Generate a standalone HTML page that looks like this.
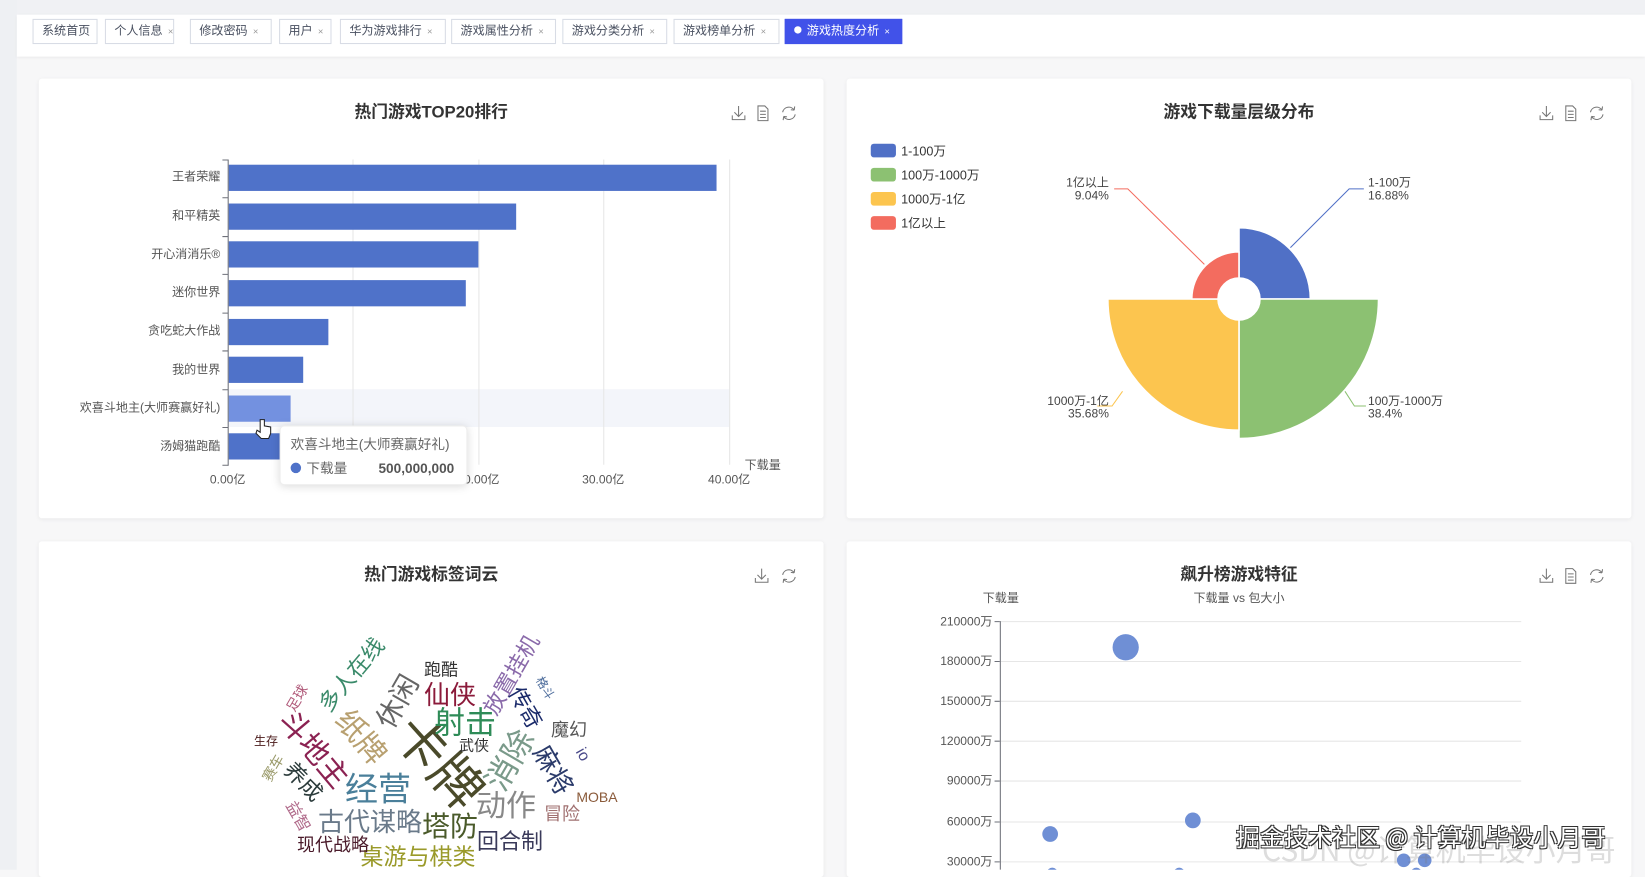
<!DOCTYPE html>
<html><head><meta charset="utf-8">
<style>
*{margin:0;padding:0;box-sizing:border-box}
html,body{width:1645px;height:870px;overflow:hidden;background:#f7f7f8;font-family:"Liberation Sans","Noto Sans CJK SC",sans-serif}
#wrap{position:absolute;left:0;top:0;width:1568px;height:829px;transform:scale(1.04911);transform-origin:0 0}
.leftstrip{position:absolute;left:0;top:0;width:16px;height:829px;background:#eef0f3}
.topstrip{position:absolute;left:0;top:0;width:1568px;height:14px;background:#f0f1f4}
.tabbar{position:absolute;left:16px;top:14px;width:1552px;height:40px;background:#fff;box-shadow:0 1px 3px rgba(0,0,0,.08)}
.tab{position:absolute;top:18px;height:24px;border:1px solid #d8dce5;background:#fff;font-size:11.5px;color:#495060;line-height:22px;padding-left:8px;white-space:nowrap}
.tab i{font-style:normal;color:#999;font-size:9px;margin-left:5px}
.tab.act{background:#4152e9;border-color:#4152e9;color:#fff}
.tab.act i{color:#fff}
.tab.act:before{content:"";display:inline-block;width:7px;height:7px;border-radius:50%;background:#fff;margin-right:5px;vertical-align:1px}
.panel{position:absolute;background:#fff;border-radius:3px;box-shadow:0 1px 4px rgba(0,0,0,.06)}
svg text{font-family:"Liberation Sans","Noto Sans CJK SC",sans-serif}
#wc{position:absolute;left:0;top:0;width:1645px;height:870px;pointer-events:none}
#wc span{position:absolute;white-space:nowrap;transform:translate(-50%,-50%);line-height:1;font-family:"Liberation Sans","Noto Sans CJK SC",sans-serif}
.wm{position:absolute;left:1236px;top:818px;font-size:24px;color:#fff;white-space:nowrap;font-family:"Noto Sans CJK SC",sans-serif;text-shadow:-1px -1px 0 #333,1px -1px 0 #333,-1px 1px 0 #333,1px 1px 0 #333}
.wm2{position:absolute;left:1262px;top:826px;font-size:30px;color:rgba(120,120,120,.25);white-space:nowrap;font-family:"Noto Sans CJK SC",sans-serif}
</style></head><body>
<div id="wrap">
<div class="topstrip"></div>
<div class="leftstrip"></div>
<div class="tabbar"></div>
<div class="tab" style="left:31px;width:62px">系统首页</div>
<div class="tab" style="left:100px;width:66px">个人信息<i>×</i></div>
<div class="tab" style="left:181px;width:78px">修改密码<i>×</i></div>
<div class="tab" style="left:266px;width:50px">用户<i>×</i></div>
<div class="tab" style="left:324px;width:101px">华为游戏排行<i>×</i></div>
<div class="tab" style="left:430px;width:100px">游戏属性分析<i>×</i></div>
<div class="tab" style="left:536px;width:100px">游戏分类分析<i>×</i></div>
<div class="tab" style="left:642px;width:101px">游戏榜单分析<i>×</i></div>
<div class="tab act" style="left:748px;width:112px">游戏热度分析<i>×</i></div>

<div class="panel" style="left:37px;top:75px;width:748px;height:419px"></div>
<div class="panel" style="left:807px;top:75px;width:748px;height:419px"></div>
<div class="panel" style="left:37px;top:516px;width:748px;height:320px"></div>
<div class="panel" style="left:807px;top:516px;width:748px;height:320px"></div>

<svg width="1568" height="829" style="position:absolute;left:0;top:0">
<defs>
<g id="dl"><path d="M0 -7 V3 M-4 -1 L0 3 L4 -1 M-6 2 V6 H6 V2" fill="none" stroke="#777" stroke-width="1"/></g>
<g id="doc"><path d="M-4.5 -7 H2 L5 -4 V7 H-4.5 Z M-2.5 -2 H3 M-2.5 1 H3 M-2.5 4 H3" fill="none" stroke="#777" stroke-width="1"/></g>
<g id="rf"><path d="M-6 -1 A6 6 0 0 1 5 -3 M5 -3 L5.5 -6.5 M5 -3 L1.8 -3.4 M6 1 A6 6 0 0 1 -5 3 M-5 3 L-5.5 6.5 M-5 3 L-1.8 3.4" fill="none" stroke="#777" stroke-width="1"/></g>
</defs>
<!-- titles -->
<g font-size="16" font-weight="bold" fill="#333" text-anchor="middle">
<text x="411" y="112">热门游戏TOP20排行</text>
<text x="1181" y="112">游戏下载量层级分布</text>
<text x="411" y="553">热门游戏标签词云</text>
<text x="1181" y="553">飙升榜游戏特征</text>
</g>
<use href="#dl" x="704" y="108"/><use href="#doc" x="727" y="108"/><use href="#rf" x="752" y="108"/>
<use href="#dl" x="1474" y="108"/><use href="#doc" x="1497" y="108"/><use href="#rf" x="1522" y="108"/>
<use href="#dl" x="726" y="549"/><use href="#rf" x="752" y="549"/>
<use href="#dl" x="1474" y="549"/><use href="#doc" x="1497" y="549"/><use href="#rf" x="1522" y="549"/>

<!-- bar chart -->
<rect x="217" y="371" width="478" height="36" fill="#f3f5fa"/>
<g stroke="#e6e6e6"><line x1="336.5" y1="152" x2="336.5" y2="443"/><line x1="456.5" y1="152" x2="456.5" y2="443"/><line x1="575.5" y1="152" x2="575.5" y2="443"/><line x1="695.5" y1="152" x2="695.5" y2="443"/></g>
<g fill="#4f72c9">
<rect x="218" y="157" width="465" height="25"/>
<rect x="218" y="194" width="274" height="25"/>
<rect x="218" y="230" width="238" height="25"/>
<rect x="218" y="267" width="226" height="25"/>
<rect x="218" y="304" width="95" height="25"/>
<rect x="218" y="340" width="71" height="25"/>
<rect x="218" y="377" width="59" height="25" fill="#7391e0"/>
<rect x="218" y="413" width="55" height="25"/>
</g>
<g stroke="#6e7079"><line x1="217.5" y1="152" x2="217.5" y2="444"/>
<path d="M212 152.5H217.5 M212 188.5H217.5 M212 225.5H217.5 M212 261.5H217.5 M212 298.5H217.5 M212 334.5H217.5 M212 371.5H217.5 M212 407.5H217.5 M212 443.5H217.5"/></g>
<g font-size="11.5" fill="#555" text-anchor="end">
<text x="210" y="172">王者荣耀</text><text x="210" y="209">和平精英</text><text x="210" y="246">开心消消乐®</text><text x="210" y="282">迷你世界</text><text x="210" y="319">贪吃蛇大作战</text><text x="210" y="356">我的世界</text><text x="210" y="392">欢喜斗地主(大师赛赢好礼)</text><text x="210" y="429">汤姆猫跑酷</text>
</g>
<g font-size="11.5" fill="#555" text-anchor="middle">
<text x="217" y="461">0.00亿</text><text x="336" y="461">10.00亿</text><text x="456" y="461">20.00亿</text><text x="575" y="461">30.00亿</text><text x="695" y="461">40.00亿</text>
<text x="727" y="447">下载量</text>
</g>
<rect x="267" y="406" width="178" height="56" rx="4" fill="#fff" stroke="#eee" style="filter:drop-shadow(0 1px 4px rgba(0,0,0,.15))"/>
<text x="277" y="428" font-size="13" fill="#666">欢喜斗地主(大师赛赢好礼)</text>
<circle cx="282" cy="446" r="5" fill="#4f72c9"/>
<text x="292" y="451" font-size="13" fill="#666">下载量</text>
<text x="433" y="451" font-size="13" font-weight="bold" fill="#555" text-anchor="end">500,000,000</text>
<path d="M248 400 L248 412 L245 410 L244 413 L249 418 L256 418 L258 413 L258 407 L252 406 L252 400 Z" fill="#fff" stroke="#222" stroke-width="1"/>

<!-- pie -->
<g stroke="#fff" stroke-width="1.5" stroke-linejoin="round">
<path d="M1181,265 L1181,217 A68,68 0 0 1 1249,285 L1201,285 A20,20 0 0 0 1181,265 Z" fill="#5070c6"/>
<path d="M1201,285 L1314,285 A133,133 0 0 1 1181,418 L1181,305 A20,20 0 0 0 1201,285 Z" fill="#8cc172"/>
<path d="M1181,305 L1181,410 A125,125 0 0 1 1056,285 L1161,285 A20,20 0 0 0 1181,305 Z" fill="#fcc54f"/>
<path d="M1161,285 L1136,285 A45,45 0 0 1 1181,240 L1181,265 A20,20 0 0 0 1161,285 Z" fill="#f36c5f"/>
</g>
<g fill="none" stroke-width="1">
<path d="M1230 236 L1286 180 L1300 180" stroke="#5070c6"/>
<path d="M1148 252 L1075 180 L1062 180" stroke="#f36c5f"/>
<path d="M1070 373 L1060 387 L1046 387" stroke="#fcc54f"/>
<path d="M1282 373 L1291 387 L1302 387" stroke="#8cc172"/>
</g>
<g font-size="11.5" fill="#444">
<text x="1304" y="178">1-100万</text><text x="1304" y="190">16.88%</text>
<text x="1304" y="386">100万-1000万</text><text x="1304" y="398">38.4%</text>
<g text-anchor="end"><text x="1057" y="178">1亿以上</text><text x="1057" y="190">9.04%</text>
<text x="1057" y="386">1000万-1亿</text><text x="1057" y="398">35.68%</text></g>
</g>
<rect x="830" y="137" width="24" height="13" rx="3" fill="#5070c6"/>
<rect x="830" y="160" width="24" height="13" rx="3" fill="#8cc172"/>
<rect x="830" y="183" width="24" height="13" rx="3" fill="#fcc54f"/>
<rect x="830" y="206" width="24" height="13" rx="3" fill="#f36c5f"/>
<g font-size="12" fill="#333"><text x="859" y="148">1-100万</text><text x="859" y="171">100万-1000万</text><text x="859" y="194">1000万-1亿</text><text x="859" y="217">1亿以上</text></g>

<!-- scatter -->
<g stroke="#e6e6e6"><path d="M953 592.5H1450 M953 630.5H1450 M953 668.5H1450 M953 706.5H1450 M953 744.5H1450 M953 783.5H1450 M953 821.5H1450"/></g>
<g stroke="#6e7079"><line x1="953.5" y1="592" x2="953.5" y2="829"/><path d="M948 592.5H953 M948 630.5H953 M948 668.5H953 M948 706.5H953 M948 744.5H953 M948 783.5H953 M948 821.5H953"/></g>
<g font-size="11.5" fill="#555" text-anchor="end">
<text x="946" y="596">210000万</text><text x="946" y="634">180000万</text><text x="946" y="672">150000万</text><text x="946" y="710">120000万</text><text x="946" y="748">90000万</text><text x="946" y="787">60000万</text><text x="946" y="825">30000万</text>
</g>
<text x="954" y="574" font-size="11.5" fill="#555" text-anchor="middle">下载量</text>
<text x="1181" y="574" font-size="11.5" fill="#555" text-anchor="middle">下载量 vs 包大小</text>
<g fill="#6f8fd5">
<circle cx="1073" cy="617" r="12.5"/><circle cx="1001" cy="795" r="7.5"/><circle cx="1137" cy="782" r="7.5"/>
<circle cx="1338" cy="820" r="6.5"/><circle cx="1358" cy="820" r="6.5"/>
<circle cx="1003" cy="832" r="5"/><circle cx="1124" cy="832" r="5"/><circle cx="1350" cy="832" r="5"/>
</g>
</svg>
</div>

<div id="wc">
<span style="left:438px;top:763px;font-size:52px;color:#4a4a2a;transform:translate(-50%,-50%) rotate(48deg)">卡牌</span>
<span style="left:465px;top:723px;font-size:31px;color:#2e8b57">射击</span>
<span style="left:378px;top:789px;font-size:33px;color:#4a7f9a">经营</span>
<span style="left:360px;top:738px;font-size:30px;color:#b8a070;transform:translate(-50%,-50%) rotate(50deg)">纸牌</span>
<span style="left:398px;top:702px;font-size:28px;color:#666;transform:translate(-50%,-50%) rotate(-60deg)">休闲</span>
<span style="left:313px;top:750px;font-size:30px;color:#8b2252;transform:translate(-50%,-50%) rotate(50deg)">斗地主</span>
<span style="left:352px;top:675px;font-size:22px;color:#3a8a6a;transform:translate(-50%,-50%) rotate(-50deg)">多人在线</span>
<span style="left:450px;top:695px;font-size:26px;color:#8b1a3a">仙侠</span>
<span style="left:441px;top:670px;font-size:17px;color:#333">跑酷</span>
<span style="left:512px;top:675px;font-size:22px;color:#8a6aaa;transform:translate(-50%,-50%) rotate(-60deg)">放置挂机</span>
<span style="left:525px;top:708px;font-size:22px;color:#1a2a6a;transform:translate(-50%,-50%) rotate(60deg)">传奇</span>
<span style="left:545px;top:688px;font-size:12px;color:#4a6a9a;transform:translate(-50%,-50%) rotate(60deg)">格斗</span>
<span style="left:569px;top:730px;font-size:18px;color:#555">魔幻</span>
<span style="left:474px;top:746px;font-size:15px;color:#333">武侠</span>
<span style="left:510px;top:760px;font-size:32px;color:#7a9a8a;transform:translate(-50%,-50%) rotate(-60deg)">消除</span>
<span style="left:553px;top:770px;font-size:26px;color:#2a3a6a;transform:translate(-50%,-50%) rotate(60deg)">麻将</span>
<span style="left:582px;top:755px;font-size:16px;color:#4a4a8a;transform:translate(-50%,-50%) rotate(60deg)">io</span>
<span style="left:597px;top:797px;font-size:14px;color:#8a5a3a">MOBA</span>
<span style="left:562px;top:814px;font-size:18px;color:#a07070">冒险</span>
<span style="left:506px;top:807px;font-size:30px;color:#888">动作</span>
<span style="left:510px;top:842px;font-size:22px;color:#3a3a5a">回合制</span>
<span style="left:450px;top:827px;font-size:28px;color:#4a5a2a">塔防</span>
<span style="left:370px;top:822px;font-size:26px;color:#6a7a8a">古代谋略</span>
<span style="left:418px;top:857px;font-size:23px;color:#9a9a2a">桌游与棋类</span>
<span style="left:333px;top:845px;font-size:18px;color:#4a1a2a">现代战略</span>
<span style="left:297px;top:817px;font-size:16px;color:#b06a8a;transform:translate(-50%,-50%) rotate(60deg)">益智</span>
<span style="left:303px;top:782px;font-size:22px;color:#2a3a3a;transform:translate(-50%,-50%) rotate(45deg)">养成</span>
<span style="left:273px;top:768px;font-size:14px;color:#9a9a6a;transform:translate(-50%,-50%) rotate(-60deg)">赛车</span>
<span style="left:266px;top:741px;font-size:12px;color:#4a1a1a">生存</span>
<span style="left:297px;top:698px;font-size:14px;color:#b05a7a;transform:translate(-50%,-50%) rotate(-60deg)">足球</span>
</div>
<div class="wm2">CSDN @计算机毕设小月哥</div>
<div class="wm">掘金技术社区 @ 计算机毕设小月哥</div>
</body></html>
